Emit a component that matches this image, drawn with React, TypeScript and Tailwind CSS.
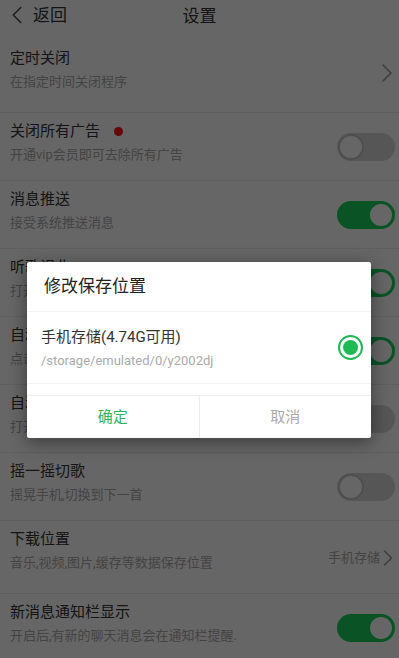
import { ChevronLeft, ChevronRight } from 'lucide-react'

interface Row {
    title: string
    desc: string
    kind: 'link' | 'on' | 'off'
    dot?: boolean
    value?: string
}

const rows: Row[] = [
    { title: '定时关闭', desc: '在指定时间关闭程序', kind: 'link' },
    { title: '关闭所有广告', desc: '开通vip会员即可去除所有广告', kind: 'off', dot: true },
    { title: '消息推送', desc: '接受系统推送消息', kind: 'on' },
    { title: '听歌识曲', desc: '打开后自动识别周围的歌曲', kind: 'on' },
    { title: '自动播放', desc: '点击歌单后自动开始播放', kind: 'on' },
    { title: '自动下载歌词', desc: '打开后自动下载歌词', kind: 'off' },
    { title: '摇一摇切歌', desc: '摇晃手机,切换到下一首', kind: 'off' },
    { title: '下载位置', desc: '音乐,视频,图片,缓存等数据保存位置', kind: 'link', value: '手机存储' },
    { title: '新消息通知栏显示', desc: '开启后,有新的聊天消息会在通知栏提醒.', kind: 'on' },
]

function Toggle({ on }: { on: boolean }) {
    return (
        <div
            className={
                on
                    ? 'w-[58px] h-[28px] rounded-full bg-[#1bd05e] flex items-center justify-end p-[1px]'
                    : 'w-[58px] h-[28px] rounded-full bg-[#d6d6d6] flex items-center justify-start p-[1px]'
            }
        >
            <div
                className={
                    on
                        ? 'w-[26px] h-[26px] rounded-full bg-white border-[2px] border-[#1bd05e]'
                        : 'w-[26px] h-[26px] rounded-full bg-white border-[2px] border-[#c4c4c4]'
                }
            />
        </div>
    )
}

export default function App() {
    return (
        <div
            className="relative w-[399px] h-[658px] overflow-hidden bg-white"
            style={{ fontFamily: 'Roboto, "Noto Sans CJK SC", sans-serif' }}
        >
            {/* header */}
            <div className="h-[40px] flex items-center relative">
                <div className="flex items-center pl-[2px] pb-[10px]">
                    <ChevronLeft size={30} strokeWidth={1.2} className="text-[#444]" />
                    <span className="text-[17px] text-[#333] ml-[1px] leading-none">返回</span>
                </div>
                <span className="absolute left-1/2 -translate-x-1/2 top-[6px] text-[17px] text-[#333] leading-[20px]">设置</span>
            </div>

            {/* rows */}
            <div className="flex flex-col">
                {rows.map((r, i) => (
                    <div
                        key={i}
                        className={
                            (r.kind === 'link' ? 'h-[73px]' : 'h-[68px]') +
                            ' flex items-center justify-between pl-[10px] pr-[4px] border-b border-[#ececec]'
                        }
                    >
                        <div className="self-start pt-[7px] flex flex-col">
                            <div className="flex items-center">
                                <span className="text-[15px] leading-[22px] text-[#333]">{r.title}</span>
                                {r.dot && <span className="ml-[14px] w-[9px] h-[9px] rounded-full bg-[#ff1414]" />}
                            </div>
                            <span className="mt-[4px] text-[13px] leading-[18px] text-[#aaa]">{r.desc}</span>
                        </div>
                        {r.kind === 'link' ? (
                            r.value ? (
                                <div className="flex items-center text-[#aaa] mt-[2px] -mr-[7px]">
                                    <span className="text-[13px]">{r.value}</span>
                                    <ChevronRight size={28} strokeWidth={1.3} className="text-[#999] -ml-[6px]" />
                                </div>
                            ) : (
                                <ChevronRight size={32} strokeWidth={1.2} className="text-[#999] -mr-[8px] -mt-[6px]" />
                            )
                        ) : (
                            <Toggle on={r.kind === 'on'} />
                        )}
                    </div>
                ))}
            </div>

            {/* dim overlay */}
            <div className="absolute inset-0 bg-black/60" />

            {/* dialog */}
            <div className="absolute left-[27px] top-[262px] w-[344px] bg-white rounded-[2px] shadow-[0_4px_18px_rgba(0,0,0,0.45)]">
                <div className="h-[50px] flex items-center pl-[17px] border-b border-[#f2f2f2]">
                    <span className="text-[17px] text-[#222]">修改保存位置</span>
                </div>
                <div className="h-[72px] flex items-center justify-between pl-[14px] pr-[8px] border-b border-[#f4f4f4]">
                    <div className="flex flex-col">
                        <span className="text-[15px] leading-[22px] text-[#333]">手机存储(4.74G可用)</span>
                        <span className="mt-[4px] text-[13px] leading-[18px] text-[#aaa]">/storage/emulated/0/y2002dj</span>
                    </div>
                    <div className="w-[25px] h-[25px] rounded-full border-[2px] border-[#1db954] flex items-center justify-center">
                        <div className="w-[15px] h-[15px] rounded-full bg-[#1db954]" />
                    </div>
                </div>
                <div className="mt-[11px] h-[43px] flex border-t border-[#ededed]">
                    <div className="flex-1 flex items-center justify-center text-[15px] text-[#2eb35c] border-r border-[#ededed]">确定</div>
                    <div className="flex-1 flex items-center justify-center text-[15px] text-[#aaa]">取消</div>
                </div>
            </div>
        </div>
    )
}
